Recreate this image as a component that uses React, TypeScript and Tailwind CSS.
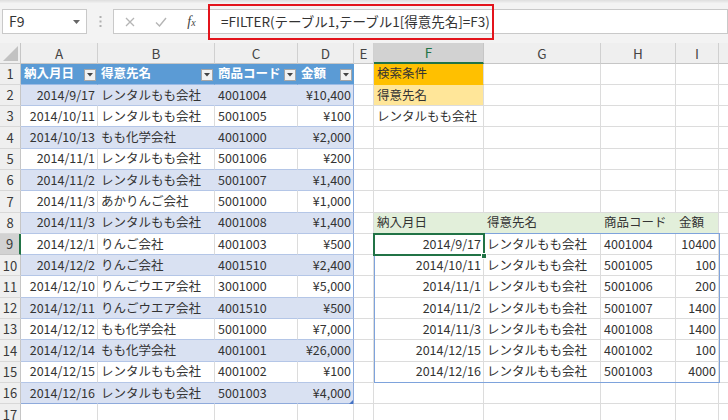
import React from "react";

const W = [
  "w-[21px]",
  "w-[77px]",
  "w-[117px]",
  "w-[83px]",
  "w-[56px]",
  "w-[20px]",
  "w-[110px]",
  "w-[117px]",
  "w-[75px]",
  "w-[43px]",
  "w-[40px]",
];
const LETTERS = ["", "A", "B", "C", "D", "E", "F", "G", "H", "I", ""];

const T1: string[][] = [
  ["2014/9/17", "レンタルもも会社", "4001004", "¥10,400"],
  ["2014/10/11", "レンタルもも会社", "5001005", "¥100"],
  ["2014/10/13", "もも化学会社", "4001000", "¥2,000"],
  ["2014/11/1", "レンタルもも会社", "5001006", "¥200"],
  ["2014/11/2", "レンタルもも会社", "5001007", "¥1,400"],
  ["2014/11/3", "あかりんご会社", "5001000", "¥1,000"],
  ["2014/11/3", "レンタルもも会社", "4001008", "¥1,400"],
  ["2014/12/1", "りんご会社", "4001003", "¥500"],
  ["2014/12/2", "りんご会社", "4001510", "¥2,400"],
  ["2014/12/10", "りんごウエア会社", "3001000", "¥5,000"],
  ["2014/12/11", "りんごウエア会社", "4001510", "¥500"],
  ["2014/12/12", "もも化学会社", "5001000", "¥7,000"],
  ["2014/12/14", "もも化学会社", "4001001", "¥26,000"],
  ["2014/12/15", "レンタルもも会社", "4001002", "¥100"],
  ["2014/12/16", "レンタルもも会社", "5001003", "¥4,000"],
];

const T2: string[][] = [
  ["2014/9/17", "レンタルもも会社", "4001004", "10400"],
  ["2014/10/11", "レンタルもも会社", "5001005", "100"],
  ["2014/11/1", "レンタルもも会社", "5001006", "200"],
  ["2014/11/2", "レンタルもも会社", "5001007", "1400"],
  ["2014/11/3", "レンタルもも会社", "4001008", "1400"],
  ["2014/12/15", "レンタルもも会社", "4001002", "100"],
  ["2014/12/16", "レンタルもも会社", "5001003", "4000"],
];

type CellDef = {
  text?: string;
  right?: boolean;
  bg: string;
  br: string;
  bb: string;
  txt?: string;
  filter?: boolean;
};

function getCell(r: number, c: number): CellDef {
  const base: CellDef = { bg: "bg-white", br: "border-r-[#dcdcdc]", bb: "border-b-[#dcdcdc]" };
  if (c >= 1 && c <= 4) {
    if (r === 1) {
      return {
        text: ["納入月日", "得意先名", "商品コード", "金額"][c - 1],
        bg: "bg-[#5b9bd5]",
        br: "border-r-[#5b9bd5]",
        bb: "border-b-[#9bbbe6]",
        txt: "text-white font-bold",
        filter: true,
      };
    }
    if (r >= 2 && r <= 16) {
      const band = r % 2 === 0;
      const row = T1[r - 2];
      return {
        text: row[c - 1],
        right: c === 1 || c === 4,
        bg: band ? "bg-[#d9e1f2]" : "bg-white",
        br: c === 4 ? "border-r-[#8eaadb]" : band ? "border-r-[#d9e1f2]" : "border-r-[#dcdcdc]",
        bb: r === 16 ? "border-b-[#8eaadb]" : "border-b-[#b4c6e7]",
      };
    }
  }
  if (c === 6 && r === 1) {
    return { text: "検索条件", bg: "bg-[#ffc000]", br: "border-r-[#dcdcdc]", bb: "border-b-[#ffc000]" };
  }
  if (c === 6 && r === 2) {
    return { text: "得意先名", bg: "bg-[#ffe699]", br: "border-r-[#dcdcdc]", bb: "border-b-[#dcdcdc]" };
  }
  if (c === 6 && r === 3) {
    return { ...base, text: "レンタルもも会社" };
  }
  if (r === 8 && c >= 6 && c <= 9) {
    return {
      text: ["納入月日", "得意先名", "商品コード", "金額"][c - 6],
      bg: "bg-[#e2efda]",
      br: c === 9 ? "border-r-[#dcdcdc]" : "border-r-[#e2efda]",
      bb: "border-b-[#dcdcdc]",
    };
  }
  if (r >= 9 && r <= 15 && c >= 6 && c <= 9) {
    const row = T2[r - 9];
    return { ...base, text: row[c - 6], right: c === 6 || c === 9 };
  }
  return base;
}

function FilterButton() {
  return (
    <div className="absolute right-[1px] bottom-[3px] w-[12px] h-[12px] bg-[#f2f2f2] border border-[#a6a6a6] flex items-center justify-center">
      <svg width="6" height="4" viewBox="0 0 6 4">
        <path d="M0 0 L6 0 L3 3.5 Z" fill="#444" />
      </svg>
    </div>
  );
}

function Row({ r }: { r: number }) {
  const selected = r === 9;
  return (
    <div className="flex h-[21.3px]">
      <div
        className={
          selected
            ? "w-[21px] shrink-0 h-full bg-[#d2d2d2] border-r-2 border-r-[#217346] border-b border-b-[#c6c6c6] flex items-center justify-center text-[13px] text-[#3a3a3a]"
            : "w-[21px] shrink-0 h-full bg-[#efefef] border-r border-r-[#c6c6c6] border-b border-b-[#d8d8d8] flex items-center justify-center text-[13px] text-[#3a3a3a]"
        }
      >
        {r}
      </div>
      {Array.from({ length: 10 }, (_, i) => {
        const c = i + 1;
        const d = getCell(r, c);
        return (
          <div
            key={c}
            className={[
              W[c],
              "shrink-0 h-full border-r border-b flex items-center whitespace-nowrap relative text-[12.5px]",
              d.bg,
              d.br,
              d.bb,
              d.txt ?? "text-[#333]",
              d.right ? "justify-end pr-[2px]" : "justify-start pl-[3px]",
            ].join(" ")}
          >
            {d.text}
            {d.filter && <FilterButton />}
          </div>
        );
      })}
    </div>
  );
}

export default function App() {
  return (
    <div className="w-[728px] h-[420px] overflow-hidden bg-white relative font-['Noto_Sans_CJK_JP','Noto_Sans',sans-serif] text-[#333]">
      {/* Toolbar */}
      <div className="h-[43px] bg-[#f3f3f3] relative">
        <div className="h-[3px] bg-gradient-to-b from-[#dedede] to-[#f0f0f0]" />
        <div className="flex items-center pt-[6px]">
          <div className="ml-[2px] w-[85px] h-[25px] bg-white border border-[#c9c9c9] flex items-center justify-between pl-[6px] pr-[6px]">
            <span className="text-[14px] text-[#333]">F9</span>
            <svg width="7" height="4" viewBox="0 0 7 4">
              <path d="M0 0 L7 0 L3.5 4 Z" fill="#666" />
            </svg>
          </div>
          <div className="w-[26px] flex justify-center">
            <svg width="3" height="11" viewBox="0 0 3 11">
              <rect x="0.5" y="0" width="2" height="2" fill="#b0b0b0" />
              <rect x="0.5" y="4.5" width="2" height="2" fill="#b0b0b0" />
              <rect x="0.5" y="9" width="2" height="2" fill="#b0b0b0" />
            </svg>
          </div>
          <div className="flex-1 h-[25px] bg-white border border-[#c9c9c9] flex items-center">
            <div className="w-[31px] flex justify-center">
              <svg width="10" height="10" viewBox="0 0 10 10">
                <path d="M1 1 L9 9 M9 1 L1 9" stroke="#b5b5b5" strokeWidth="1.3" />
              </svg>
            </div>
            <div className="w-[31px] flex justify-center">
              <svg width="12" height="10" viewBox="0 0 12 10">
                <path d="M1 5.5 L4.5 9 L11 1" stroke="#b5b5b5" strokeWidth="1.4" fill="none" />
              </svg>
            </div>
            <div className="w-[31px] flex justify-center">
              <span className="italic font-['Liberation_Serif',serif] text-[14px] text-[#444] leading-none">
                f<span className="text-[10px]">x</span>
              </span>
            </div>
            <span className="ml-[14px] text-[13.5px] text-[#333] whitespace-nowrap">
              =FILTER(テーブル1,テーブル1[得意先名]=F3)
            </span>
          </div>
        </div>
        <div className="absolute left-[208px] top-[4px] w-[286px] h-[36px] border-2 border-[#e3141c]" />
      </div>

      {/* Grid */}
      <div className="relative">
        <div className="flex h-[20.5px]">
          <div className="w-[21px] shrink-0 h-full bg-[#efefef] border-r border-b border-[#c6c6c6] relative">
            <svg className="absolute right-[2px] bottom-[2px]" width="15" height="15" viewBox="0 0 15 15">
              <path d="M15 0 L15 15 L0 15 Z" fill="#c2c2c2" />
            </svg>
          </div>
          {LETTERS.slice(1).map((L, i) => {
            const c = i + 1;
            const sel = c === 6;
            return (
              <div
                key={c}
                className={[
                  W[c],
                  "shrink-0 h-full border-r flex items-center justify-center text-[13.5px]",
                  sel
                    ? "bg-[#d2d2d2] border-r-[#c6c6c6] border-b-2 border-b-[#217346] text-[#217346]"
                    : "bg-[#efefef] border-r-[#d0d0d0] border-b border-b-[#c6c6c6] text-[#444]",
                ].join(" ")}
              >
                {L}
              </div>
            );
          })}
        </div>
        {Array.from({ length: 17 }, (_, i) => (
          <Row key={i} r={i + 1} />
        ))}

        {/* spill range border */}
        <div className="absolute left-[374px] top-[190.4px] w-[345.5px] h-[150px] border border-[#7ea3dc] pointer-events-none" />
        {/* active cell */}
        <div className="absolute left-[373px] top-[189.6px] w-[112px] h-[23.3px] border-2 border-[#217346]" />
        <div className="absolute left-[481px] top-[209.5px] w-[6px] h-[6px] bg-[#217346] border border-white" />
        {/* table resize handle */}
        <svg className="absolute left-[349px] top-[357px]" width="4" height="4" viewBox="0 0 4 4">
          <path d="M4 0 L4 4 L0 4 Z" fill="#4472c4" />
        </svg>
      </div>
    </div>
  );
}
